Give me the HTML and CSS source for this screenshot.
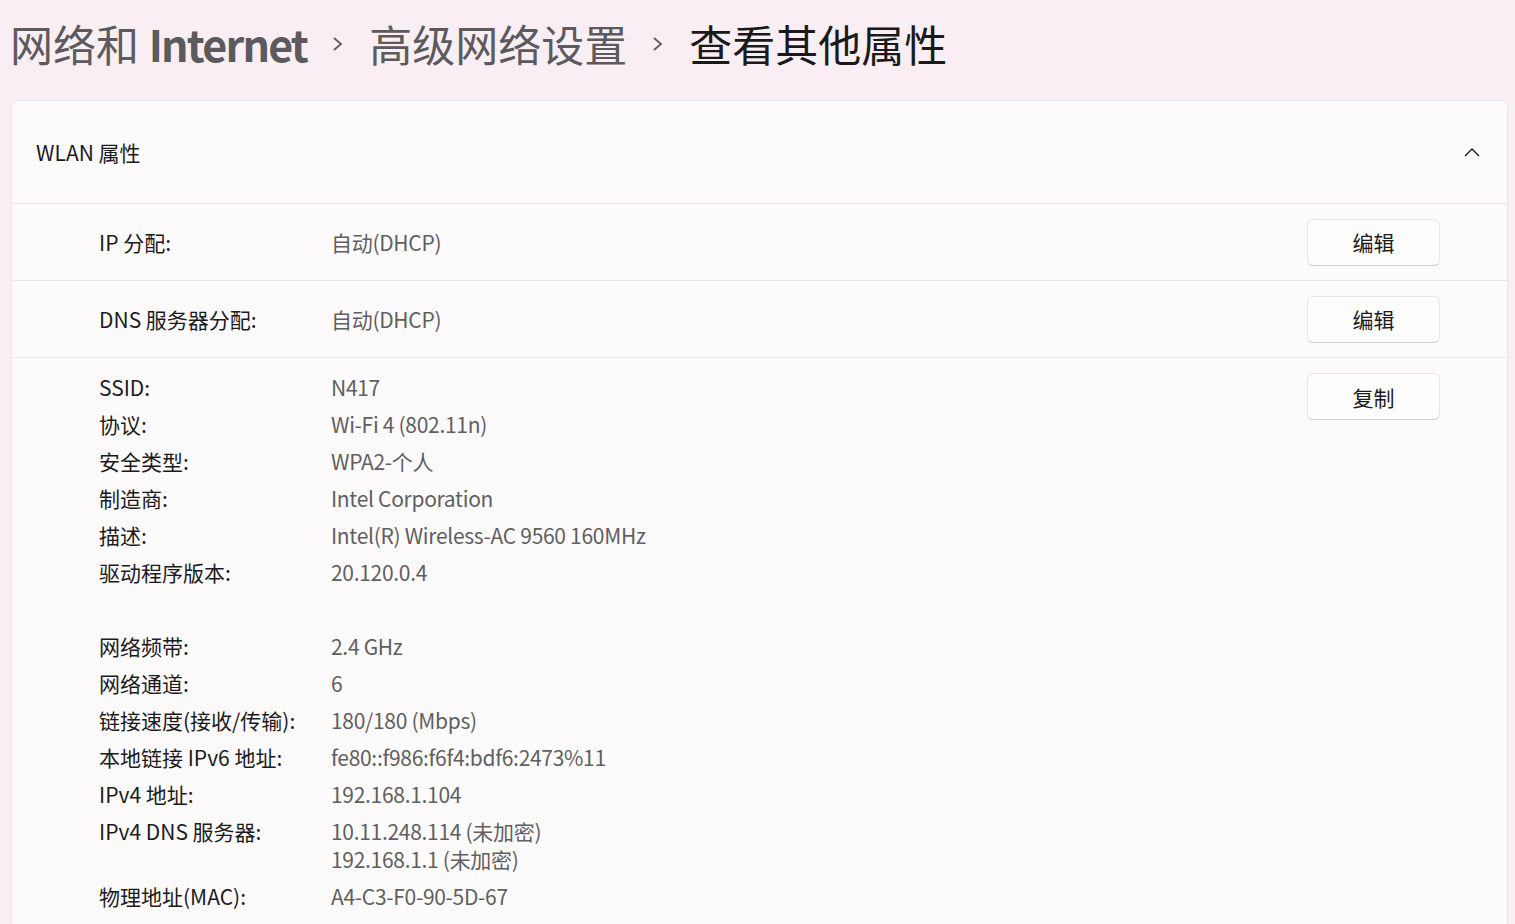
FILE: index.html
```html
<!DOCTYPE html>
<html lang="zh-CN">
<head>
  <meta charset="UTF-8">
  <meta name="viewport" content="width=device-width, initial-scale=1.0">
  <title>查看其他属性</title>
  <link rel="stylesheet" href="styles.css">
</head>
<body>
  <div class="page">
    <!-- Breadcrumb title -->
    <h1 class="breadcrumb">
      <span class="crumb">网络和 <span class="latin">Internet</span></span>
      <svg class="sep" width="12" height="16" viewBox="0 0 12 16">
        <path d="M2 2 L9 8 L2 14" fill="none" stroke="#5c5a5c" stroke-width="1.7"/>
      </svg>
      <span class="crumb">高级网络设置</span>
      <svg class="sep" width="12" height="16" viewBox="0 0 12 16">
        <path d="M2 2 L9 8 L2 14" fill="none" stroke="#5c5a5c" stroke-width="1.7"/>
      </svg>
      <span class="crumb current">查看其他属性</span>
    </h1>

    <section class="card">
      <div class="card-header">
        <span>WLAN 属性</span>
        <svg class="chevron" width="16" height="10" viewBox="0 0 16 10">
          <path d="M1 9 L8 2 L15 9" fill="none" stroke="#1b1b1b" stroke-width="1.4"/>
        </svg>
      </div>

      <div class="row">
        <div class="label">IP 分配:</div>
        <div class="value">自动(DHCP)</div>
        <button class="btn">编辑</button>
      </div>

      <div class="row">
        <div class="label">DNS 服务器分配:</div>
        <div class="value">自动(DHCP)</div>
        <button class="btn">编辑</button>
      </div>

      <div class="row details">
        <div class="props">
          <div class="label">SSID:</div><div class="value">N417</div>
          <div class="label">协议:</div><div class="value">Wi-Fi 4 (802.11n)</div>
          <div class="label">安全类型:</div><div class="value">WPA2-个人</div>
          <div class="label">制造商:</div><div class="value">Intel Corporation</div>
          <div class="label">描述:</div><div class="value">Intel(R) Wireless-AC 9560 160MHz</div>
          <div class="label">驱动程序版本:</div><div class="value">20.120.0.4</div>
          <div class="label">&nbsp;</div><div class="value"></div>
          <div class="label">网络频带:</div><div class="value">2.4 GHz</div>
          <div class="label">网络通道:</div><div class="value">6</div>
          <div class="label">链接速度(接收/传输):</div><div class="value">180/180 (Mbps)</div>
          <div class="label">本地链接 IPv6 地址:</div><div class="value">fe80::f986:f6f4:bdf6:2473%11</div>
          <div class="label">IPv4 地址:</div><div class="value">192.168.1.104</div>
          <div class="label">IPv4 DNS 服务器:</div><div class="value">10.11.248.114 (未加密)<br>192.168.1.1 (未加密)</div>
          <div class="label">物理地址(MAC):</div><div class="value">A4-C3-F0-90-5D-67</div>
        </div>
        <button class="btn">复制</button>
      </div>
    </section>
  </div>
</body>
</html>
```

FILE: styles.css
```css
/* General styling */
html, body {
  margin: 0;
  height: 100%;
  overflow: hidden;
}
body {
  font-family: "Noto Sans CJK SC", "Noto Sans", sans-serif;
  background-color: #f8eef4;
  color: #1b1b1b;
}
.page {
  padding: 0 7px 0 11px;
}

/* Breadcrumb */
.breadcrumb {
  display: flex;
  align-items: center;
  margin: 0 0 0 -1px;
  height: 86px;
  font-size: 43px;
  font-weight: 400;
  line-height: 1;
  color: #5c5a5c;
}
.breadcrumb .latin {
  font-weight: 600;
  letter-spacing: -1.8px;
}
.breadcrumb .sep {
  display: block;
  margin: 2px 25px 0 25px;
}
.breadcrumb .current {
  color: #1a1a1a;
}

/* Card */
.card {
  margin-top: 14px;
  background-color: #fdfafc;
  border: 1px solid #ebe4e9;
  border-radius: 7px;
  font-size: 21px;
}
.card-header {
  display: flex;
  justify-content: space-between;
  align-items: center;
  height: 102px;
  padding: 0 27px 0 24px;
}
.chevron {
  display: block;
}

.row {
  display: flex;
  align-items: center;
  height: 76px;
  padding: 0 67px 0 87px;
  border-top: 1px solid #ebe4e9;
}
.row .label {
  width: 232px;
  flex-shrink: 0;
}
.value {
  color: #5f5f5f;
  letter-spacing: -0.3px;
}
.row > .value {
  flex: 1;
}

.row.details {
  height: auto;
  align-items: flex-start;
  padding-top: 15px;
  padding-bottom: 20px;
}
.props {
  flex: 1;
  display: grid;
  grid-template-columns: 232px 1fr;
  row-gap: 9px;
  line-height: 28px;
}

/* Buttons */
.btn {
  width: 133px;
  height: 47px;
  font-family: inherit;
  font-size: 21px;
  color: #1b1b1b;
  background-color: #fdfdfd;
  border: 1px solid #e6e6e6;
  border-bottom-color: #cfcfcf;
  border-radius: 6px;
  cursor: pointer;
}
.btn:hover {
  background-color: #f7f7f7;
}
```
